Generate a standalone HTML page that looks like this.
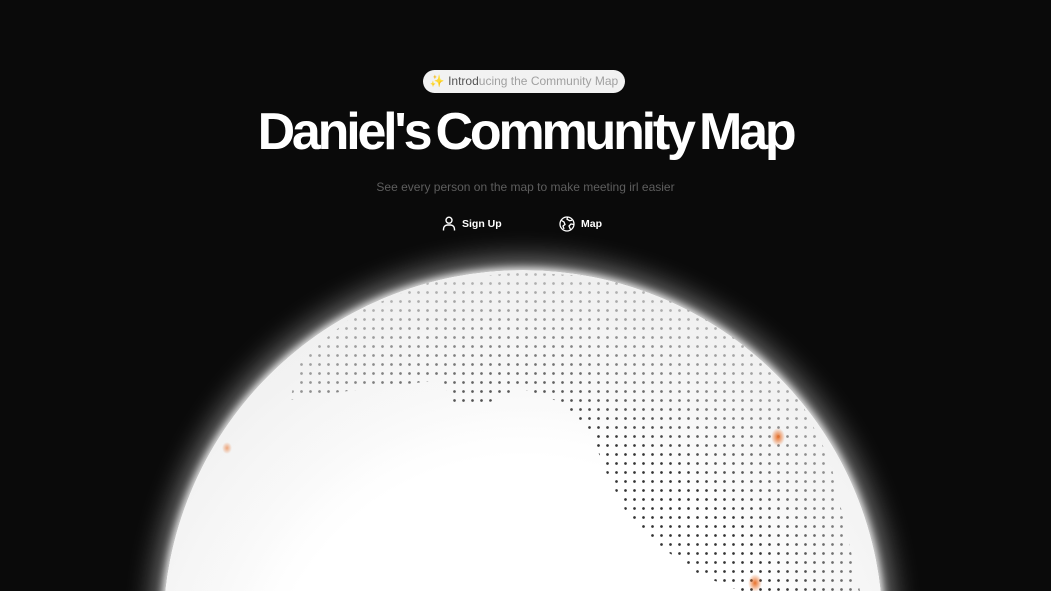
<!DOCTYPE html>
<html><head><meta charset="utf-8"><style>
html,body{margin:0;padding:0;background:#0a0a0a;width:1051px;height:591px;overflow:hidden;font-family:"Liberation Sans",sans-serif}
.wrap{position:relative;width:1051px;height:591px;overflow:hidden}
.pill{position:absolute;left:423px;top:70px;width:202px;height:23px;border-radius:12px;background:#f2f2f2;color:#a0a0a0;font-size:12px;line-height:23px;text-align:center}
.pill b{font-weight:normal;color:#555}
h1{position:absolute;left:0;width:1051px;top:100px;margin:0;text-align:center;color:#fff;font-size:52px;font-weight:bold;letter-spacing:-3.2px;word-spacing:-5px;line-height:64px}
.sub{position:absolute;left:0;width:1051px;top:180px;text-align:center;color:#5e5e5e;font-size:12px}
.btn{position:absolute;top:216px;color:#fff;font-size:10.5px;font-weight:bold;display:flex;align-items:center;gap:6px}
.globe{position:absolute;left:163px;top:270px;width:720px;height:720px;border-radius:50%;overflow:hidden;
background:radial-gradient(circle at 50% 62%,#fff 0,#fff 45%,#f4f4f4 70%,#e6e6e6 92%,#f6f6f6 100%);
box-shadow:0 0 30px 8px rgba(255,255,255,.55),0 0 8px 2px rgba(255,255,255,.9)}
.dots{position:absolute;left:-163px;top:-270px;width:1051px;height:591px;
background-image:radial-gradient(circle,#333 1.1px,transparent 1.6px);background-size:9px 9px;
clip-path:polygon(300px 360px,360px 310px,430px 282px,520px 272px,620px 278px,720px 312px,790px 380px,830px 460px,860px 591px,740px 591px,700px 575px,665px 550px,630px 520px,605px 470px,590px 430px,560px 402px,520px 388px,490px 402px,457px 407px,440px 380px,340px 392px,290px 400px)}
.fade{position:absolute;left:0;top:0;width:720px;height:720px;background:radial-gradient(circle at 50% 62%,rgba(255,255,255,0) 0,rgba(255,255,255,0) 50%,rgba(244,244,244,.4) 64%,rgba(240,240,240,.75) 80%,rgba(245,245,245,.9) 100%)}
.o{position:absolute;width:14px;height:18px;border-radius:50%;background:radial-gradient(#e8702a,rgba(232,112,42,0) 70%)}
</style></head><body><div class="wrap">
<div class="pill">✨ <b>Introd</b>ucing the Community Map</div>
<h1>Daniel's Community Map</h1>
<div class="sub">See every person on the map to make meeting irl easier</div>
<div class="btn" style="left:442px"><svg width="14" height="15" viewBox="0 0 14 15" fill="none" stroke="#fff" stroke-width="1.4"><circle cx="7" cy="4.2" r="3"/><path d="M1.5 14.5v-1.5a4 4 0 0 1 4-4h3a4 4 0 0 1 4 4v1.5"/></svg>Sign Up</div>
<div class="btn" style="left:559px"><svg width="16" height="16" viewBox="0 0 16 16" fill="none" stroke="#fff" stroke-width="1.3"><circle cx="8" cy="8" r="7"/><path d="M2.5 4.5l2.5 1.5 1 2.5-2 1.5 1 3M8.5 1.2l-.5 2 2.5 1.5 2.5-.5M14.8 8.5l-2.8-.5-2 2 1 2.5 1 1.5"/></svg>Map</div>
<div class="globe"><div class="dots"></div><div class="fade"></div></div>
<div class="o" style="left:771px;top:428px"></div>
<div class="o" style="left:748px;top:574px"></div>
<div class="o" style="left:222px;top:442px;width:10px;height:12px;opacity:.6"></div>
</div></body></html>
